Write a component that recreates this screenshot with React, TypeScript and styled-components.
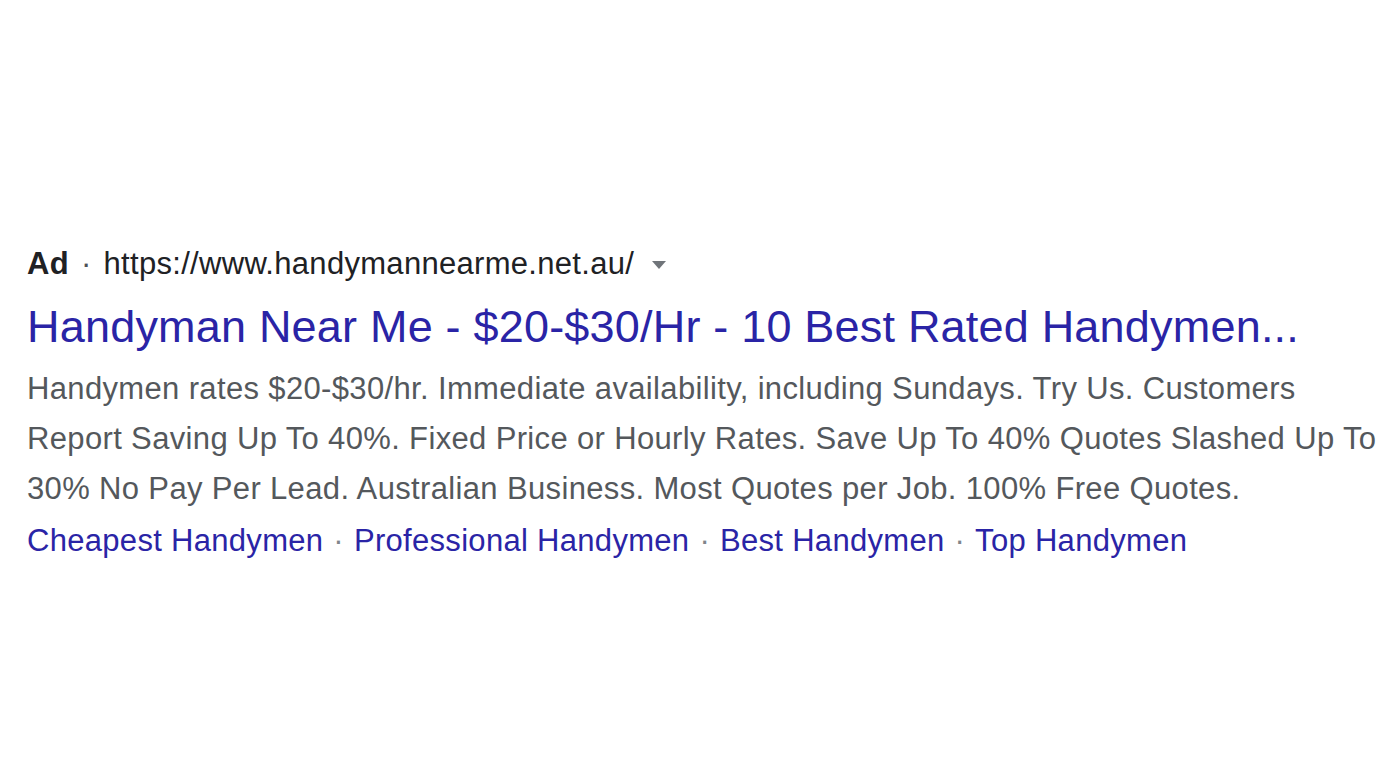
import React from "react";
import styled, { createGlobalStyle } from "styled-components";

const GlobalStyle = createGlobalStyle`
  html, body {
    margin: 0;
    padding: 0;
    background: #ffffff;
  }
  body {
    font-family: "Liberation Sans", Arial, sans-serif;
  }
`;

const Page = styled.div`
  width: 1400px;
  height: 780px;
  box-sizing: border-box;
  padding: 244px 0 0 27px;
  background: #ffffff;
  overflow: hidden;
`;

const Result = styled.div`
  display: flex;
  flex-direction: column;
  width: 1362px;
`;

const UrlRow = styled.div`
  display: flex;
  align-items: center;
  height: 40px;
  font-size: 31px;
  letter-spacing: 0.3px;
  color: #202124;
`;

const AdLabel = styled.span`
  font-weight: bold;
  color: #202124;
`;

const Dot = styled.span`
  padding: 0 12px;
  color: #4d5156;
`;

const Url = styled.span`
  color: #202124;
`;

const Caret = styled.span`
  margin-left: 18px;
  margin-top: 2px;
  width: 0;
  height: 0;
  border-left: 7px solid transparent;
  border-right: 7px solid transparent;
  border-top: 8px solid #70757a;
`;

const Title = styled.a`
  display: block;
  margin-top: 14px;
  font-size: 45px;
  line-height: 58px;
  letter-spacing: 0.2px;
  color: #2a24a6;
  text-decoration: none;
  white-space: nowrap;
`;

const Description = styled.p`
  margin: 8px 0 0;
  font-size: 31px;
  line-height: 50px;
  letter-spacing: 0.35px;
  color: #54585c;
`;

const Sitelinks = styled.div`
  display: flex;
  align-items: center;
  margin-top: 2px;
  font-size: 31px;
  line-height: 50px;
  letter-spacing: 0.3px;
  color: #80858a;
`;

const Sitelink = styled.a`
  color: #2a24a6;
  text-decoration: none;
`;

const Separator = styled.span`
  padding: 0 10px;
`;

const sitelinks = [
  "Cheapest Handymen",
  "Professional Handymen",
  "Best Handymen",
  "Top Handymen",
];

export default function App() {
  return (
    <>
      <GlobalStyle />
      <Page>
        <Result>
          <UrlRow>
            <AdLabel>Ad</AdLabel>
            <Dot>·</Dot>
            <Url>https://www.handymannearme.net.au/</Url>
            <Caret />
          </UrlRow>
          <Title href="#">
            Handyman Near Me - $20-$30/Hr - 10 Best Rated Handymen...
          </Title>
          <Description>
            Handymen rates $20-$30/hr. Immediate availability, including
            Sundays. Try Us. Customers Report Saving Up To 40%. Fixed Price or
            Hourly Rates. Save Up To 40% Quotes Slashed Up To 30% No Pay Per
            Lead. Australian Business. Most Quotes per Job. 100% Free Quotes.
          </Description>
          <Sitelinks>
            {sitelinks.map((s, i) => (
              <React.Fragment key={s}>
                {i > 0 && <Separator>·</Separator>}
                <Sitelink href="#">{s}</Sitelink>
              </React.Fragment>
            ))}
          </Sitelinks>
        </Result>
      </Page>
    </>
  );
}
